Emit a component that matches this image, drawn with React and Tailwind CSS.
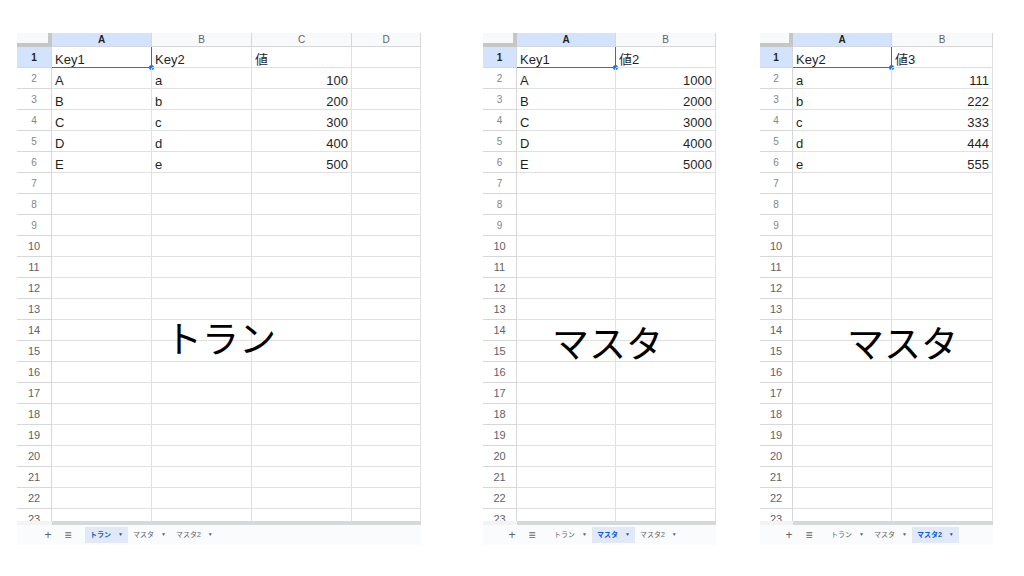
import React from 'react';

const FONT = "font-['Liberation_Sans','Noto_Sans_CJK_JP',sans-serif]";

const sheets = [
  {
    id: 'tran',
    wrap: 'ml-[17px] w-[404px]',
    rowHead: 'w-[35px]',
    cols: [
      { label: 'A', w: 'w-[100px]' },
      { label: 'B', w: 'w-[100px]' },
      { label: 'C', w: 'w-[100px]' },
      { label: 'D', w: 'w-[69px]' },
    ],
    data: [
      ['Key1', 'Key2', '値', ''],
      ['A', 'a', '100', ''],
      ['B', 'b', '200', ''],
      ['C', 'c', '300', ''],
      ['D', 'd', '400', ''],
      ['E', 'e', '500', ''],
    ],
    numCol: 2,
    active: 0,
    title: 'トラン',
    titlePos: 'left-[148px] top-[286px]',
    tabPad: 'pl-[24px]',
  },
  {
    id: 'master',
    wrap: 'ml-[62px] w-[233px]',
    rowHead: 'w-[34px]',
    cols: [
      { label: 'A', w: 'w-[99px]' },
      { label: 'B', w: 'w-[100px]' },
    ],
    data: [
      ['Key1', '値2'],
      ['A', '1000'],
      ['B', '2000'],
      ['C', '3000'],
      ['D', '4000'],
      ['E', '5000'],
    ],
    numCol: 1,
    active: 1,
    title: 'マスタ',
    titlePos: 'left-[69px] top-[291px]',
    tabPad: 'pl-[22px]',
  },
  {
    id: 'master2',
    wrap: 'ml-[44px] w-[233px]',
    rowHead: 'w-[33px]',
    cols: [
      { label: 'A', w: 'w-[99px]' },
      { label: 'B', w: 'w-[101px]' },
    ],
    data: [
      ['Key2', '値3'],
      ['a', '111'],
      ['b', '222'],
      ['c', '333'],
      ['d', '444'],
      ['e', '555'],
    ],
    numCol: 1,
    active: 2,
    title: 'マスタ',
    titlePos: 'left-[87px] top-[291px]',
    tabPad: 'pl-[22px]',
  },
];

const tabNames = ['トラン', 'マスタ', 'マスタ2'];

const Sheet = ({ s }) => {
  const rows = Array.from({ length: 23 }, (_, i) => i + 1);
  return (
    <div className={`${s.wrap} relative flex flex-col`}>
      {/* column headers */}
      <div className="flex h-[14px]">
        <div className={`${s.rowHead} shrink-0 bg-[#f8f9fa] border-r-[4px] border-b-[4px] border-[#c4c7c5]`} />
        {s.cols.map((c, i) => (
          <div
            key={c.label}
            className={`${c.w} shrink-0 flex items-center justify-center text-[10px] leading-none border-b border-r border-[#d5d7d9] ${
              i === 0 ? 'bg-[#d3e3fd] text-[#1f1f1f] font-bold' : 'bg-[#f8f9fa] text-[#5f6368]'
            }`}
          >
            {c.label}
          </div>
        ))}
      </div>

      {/* grid body */}
      <div className="h-[474px] overflow-hidden">
        {rows.map((r) => {
          const vals = s.data[r - 1];
          return (
            <div key={r} className="flex h-[21px]">
              <div
                className={`${s.rowHead} shrink-0 flex items-center justify-center pt-[1px] text-[10px] border-r border-b border-[#d5d7d9] ${
                  r === 1 ? 'bg-[#d3e3fd] text-[#1f1f1f] font-bold' : r > 9 ? 'bg-white text-[#5f6368] text-[11px]' : 'bg-white text-[#80868b]'
                }`}
              >
                {r}
              </div>
              {s.cols.map((c, ci) => {
                const v = vals ? vals[ci] : '';
                const num = r > 1 && ci === s.numCol;
                const sel = r === 1 && ci === 0;
                return (
                  <div
                    key={c.label}
                    className={`${c.w} shrink-0 relative flex items-end pb-[1px] text-[13px] leading-none text-[#1f1f1f] border-r border-b border-[#e1e1e1] ${
                      num ? 'justify-end pr-[3px]' : 'pl-[3px]'
                    } ${sel ? 'border-b-[#1a73e8] border-r-[#1a73e8]' : ''}`}
                  >
                    {v}
                    {sel && <span className="absolute -right-[3px] -bottom-[3px] w-[5px] h-[5px] rounded-full bg-[#1a73e8]" />}
                  </div>
                );
              })}
            </div>
          );
        })}
      </div>

      {/* horizontal scrollbar */}
      <div className="flex h-[4px]">
        <div className={`${s.rowHead} shrink-0 bg-[#f1f3f4]`} />
        <div className="flex-1 bg-[#d6d8da]" />
      </div>

      {/* sheet tabs */}
      <div className={`flex items-center h-[20px] bg-[#f9fbfd] ${s.tabPad} text-[7px] text-[#5f6368]`}>
        <span className="text-[12px] leading-none w-[14px] text-center">+</span>
        <span className="text-[12px] leading-none w-[14px] ml-[6px] text-center">≡</span>
        <div className="flex ml-[10px] h-full py-[2px]">
          {tabNames.map((t, i) => (
            <div
              key={t}
              className={`flex items-center gap-[7px] px-[5px] h-full ${
                i === s.active ? 'bg-[#e1e9f7] text-[#0b57d0] font-bold' : ''
              }`}
            >
              <span>{t}</span>
              <span className="text-[5px]">▼</span>
            </div>
          ))}
        </div>
      </div>

      {/* big label over the grid */}
      <div className={`absolute ${s.titlePos} text-[37px] leading-none text-black font-['Noto_Sans_CJK_JP',sans-serif]`}>
        {s.title}
      </div>
    </div>
  );
}

export default function App() {
  return (
    <div className={`w-[1024px] h-[576px] bg-white flex items-start pt-[33px] overflow-hidden ${FONT}`}>
      {sheets.map((s) => (
        <Sheet key={s.id} s={s} />
      ))}
    </div>
  );
}
